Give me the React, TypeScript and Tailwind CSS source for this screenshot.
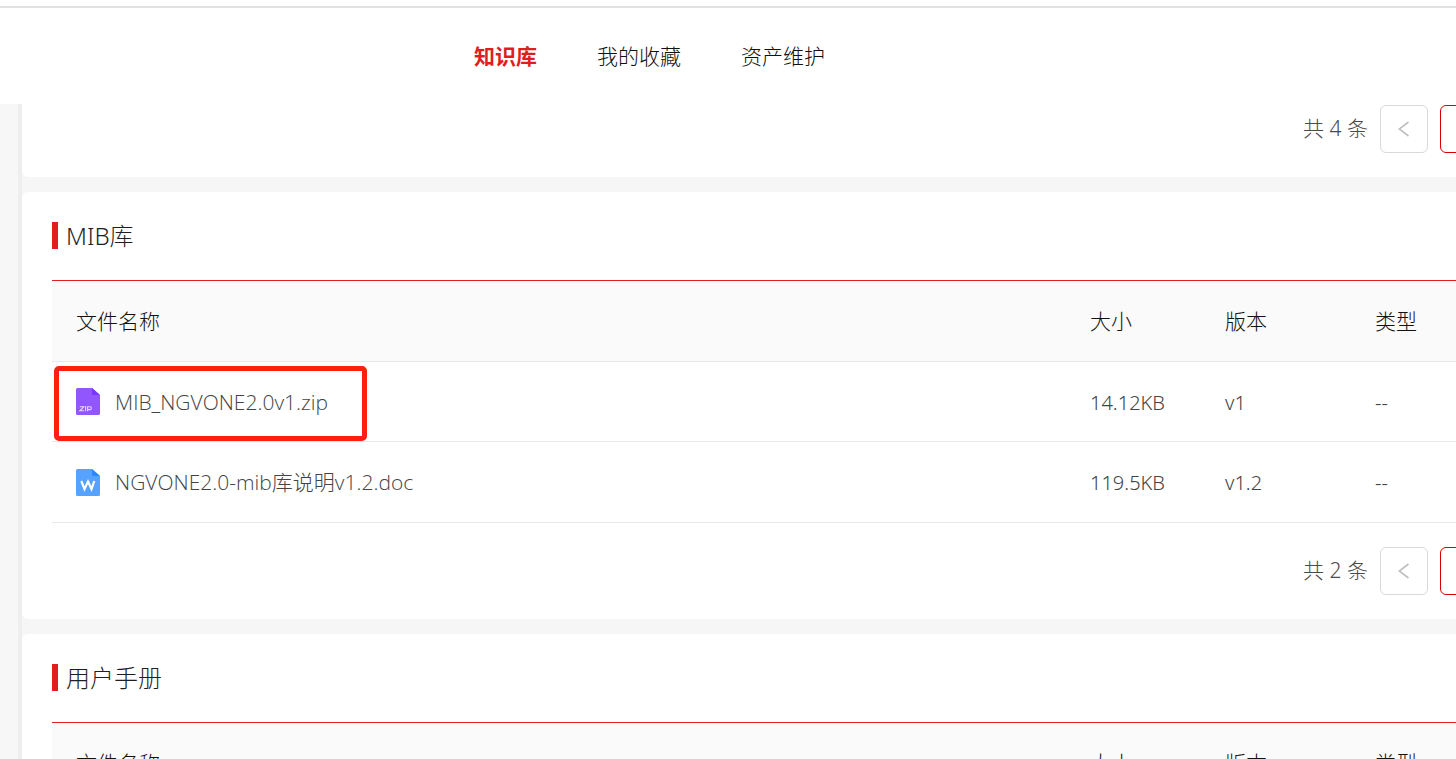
import React from "react";

type FileKind = "zip" | "doc";

interface FileRow {
  name: string;
  kind: FileKind;
  size: string;
  version: string;
  type: string;
  marked?: boolean;
}

const mibFiles: FileRow[] = [
  { name: "MIB_NGVONE2.0v1.zip", kind: "zip", size: "14.12KB", version: "v1", type: "--", marked: true },
  { name: "NGVONE2.0-mib库说明v1.2.doc", kind: "doc", size: "119.5KB", version: "v1.2", type: "--" },
];

const navItems = ["知识库", "我的收藏", "资产维护"];

function FileIcon({ kind }: { kind: FileKind }) {
  const zip = kind === "zip";
  return (
    <svg viewBox="0 0 24 27" className="h-[27px] w-6 shrink-0" aria-hidden="true">
      <path
        d="M1.5 0H16L24 7V25.5A1.5 1.5 0 0 1 22.5 27H1.5A1.5 1.5 0 0 1 0 25.5V1.5A1.5 1.5 0 0 1 1.5 0Z"
        fill={zip ? "#9256ff" : "#55a3ff"}
      />
      <path d="M16 0L24 7H17.2A1.2 1.2 0 0 1 16 5.8Z" fill={zip ? "#7a35ff" : "#2d87ff"} />
      {zip ? (
        <path
          d="M3.8 18.8H7.8L3.8 22.8H8M9.6 18.3V23.3M11.6 23.3V18.8H14A1.4 1.4 0 0 1 14 21.6H11.6"
          fill="none"
          stroke="#e6d8ff"
          strokeWidth="1.1"
        />
      ) : (
        <path d="M5.3 12L8.5 20L12 12.6L15.5 20L18.3 12" fill="none" stroke="#fff" strokeWidth="2.2" />
      )}
    </svg>
  );
}

function Pagination({ total }: { total: number }) {
  return (
    <nav aria-label="分页" className="-mr-8 flex items-center justify-end gap-3 text-[21px] text-[#4a4a4a]">
      <span>共 {total} 条</span>
      <button
        type="button"
        aria-label="上一页"
        className="flex h-12 w-12 items-center justify-center rounded-md border border-[#d9d9d9] bg-white"
      >
        <svg viewBox="0 0 12 16" className="h-4 w-3" fill="none" stroke="#bfbfbf" strokeWidth="1.6" aria-hidden="true">
          <path d="M10.5 1L1.2 8L10.5 15" />
        </svg>
      </button>
      <button
        type="button"
        aria-label="第一页"
        className="h-12 w-12 rounded-md border border-[#d90000] bg-white"
      />
    </nav>
  );
}

function FileTable({ files }: { files: FileRow[] }) {
  return (
    <table className="w-full table-fixed border-separate border-spacing-0 border-t border-[#df1e1e] text-left text-[21px]">
      <colgroup>
        <col />
        <col className="w-[135px]" />
        <col className="w-[150px]" />
        <col className="w-[105px]" />
      </colgroup>
      <thead>
        <tr className="h-[81px] bg-[#fafafa] text-[#111]">
          {["文件名称", "大小", "版本", "类型"].map((label) => (
            <th key={label} scope="col" className="border-b border-[#e8e8e8] px-6 pt-0.5 pb-0 font-light whitespace-nowrap">
              {label}
            </th>
          ))}
        </tr>
      </thead>
      <tbody className="text-[#444]">
        {files.map((file) => (
          <tr key={file.name} className="h-20 last:h-[81px]">
            <td className="relative border-b border-[#e8e8e8] px-6 py-0 font-['Open_Sans','Noto_Sans_CJK_SC',sans-serif]">
              {file.marked && (
                <span className="pointer-events-none absolute top-1 left-0.5 h-[75px] w-[313px] rounded-[5px] border-5 border-[#ff1f10]" />
              )}
              <a href="#" className="flex items-center gap-[15px]">
                <FileIcon kind={file.kind} />
                <span className="pt-0.5">{file.name}</span>
              </a>
            </td>
            <td className="border-b border-[#e8e8e8] px-6 pt-0.5 pb-0 text-xl">{file.size}</td>
            <td className="border-b border-[#e8e8e8] px-6 pt-0.5 pb-0 text-xl">{file.version}</td>
            <td className="border-b border-[#e8e8e8] px-6 pt-0.5 pb-0 text-xl">{file.type}</td>
          </tr>
        ))}
      </tbody>
    </table>
  );
}

function Section({ title, files }: { title: string; files: FileRow[] }) {
  return (
    <section className="shrink-0 rounded-l-md bg-white pt-[30px] pb-6 pl-[30px]">
      <div className="mb-[31px] flex h-[27px] items-center gap-2">
        <span className="h-full w-1.5 bg-[#df1e1e]" />
        <h2 className="text-2xl font-light text-[#1f1f1f]">{title}</h2>
      </div>
      <FileTable files={files} />
      {files.length > 0 && (
        <div className="mt-6">
          <Pagination total={files.length} />
        </div>
      )}
    </section>
  );
}

export default function App() {
  return (
    <div className="flex h-screen flex-col overflow-hidden bg-[#f6f6f6] font-['Noto_Sans','Noto_Sans_CJK_SC',sans-serif] font-light">
      <header className="h-[104px] shrink-0 bg-white pt-1.5">
        <nav className="flex h-full items-center gap-[60px] border-t-2 border-[#e1e1e1] pt-0.5 pl-[474px] text-[21px]">
          {navItems.map((item, i) => (
            <a key={item} href="#" className={i === 0 ? "font-bold text-[#df1e1e]" : "text-[#111]"}>
              {item}
            </a>
          ))}
        </nav>
      </header>
      <div className="flex min-h-0 flex-1">
        <aside className="w-[22px] shrink-0 border-r-4 border-[#eeeeee] bg-[#f7f7f7]" />
        <main className="flex min-w-0 flex-1 flex-col gap-[15px] overflow-hidden">
          <section className="shrink-0 rounded-bl-md bg-white pt-px pb-6">
            <Pagination total={4} />
          </section>
          <Section title="MIB库" files={mibFiles} />
          <Section title="用户手册" files={[]} />
        </main>
      </div>
    </div>
  );
}
